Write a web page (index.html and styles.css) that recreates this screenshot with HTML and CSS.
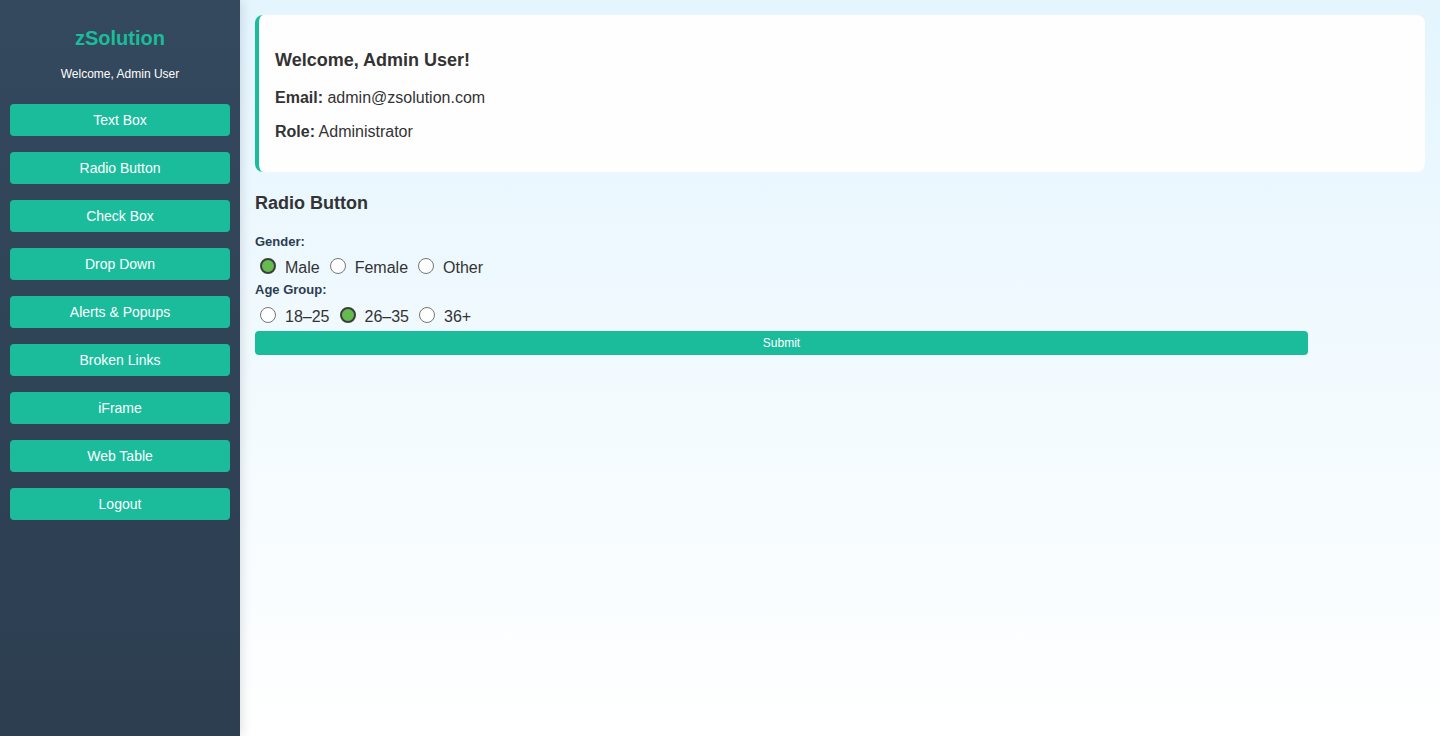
FILE: index.html
```html
<!DOCTYPE html>
<html lang="en">
<head>
<meta charset="utf-8">
<title>zSolution - Radio Button</title>
<link rel="stylesheet" href="styles.css">
</head>
<body>
<div class="layout">
  <aside class="sidebar">
    <h2 class="brand">zSolution</h2>
    <p class="welcome">Welcome, Admin User</p>
    <nav class="nav">
      <button class="nav-btn">Text Box</button>
      <button class="nav-btn">Radio Button</button>
      <button class="nav-btn">Check Box</button>
      <button class="nav-btn">Drop Down</button>
      <button class="nav-btn">Alerts &amp; Popups</button>
      <button class="nav-btn">Broken Links</button>
      <button class="nav-btn">iFrame</button>
      <button class="nav-btn">Web Table</button>
      <button class="nav-btn">Logout</button>
    </nav>
  </aside>
  <main class="main">
    <section class="card">
      <h3 class="card-title">Welcome, Admin User!</h3>
      <p class="card-line"><strong>Email:</strong> admin@zsolution.com</p>
      <p class="card-line"><strong>Role:</strong> Administrator</p>
    </section>
    <h3 class="section-title">Radio Button</h3>
    <form class="form">
      <div class="field-label">Gender:</div>
      <div class="radio-row">
        <label class="opt"><input type="radio" name="gender" checked><span>Male</span></label>
        <label class="opt"><input type="radio" name="gender"><span>Female</span></label>
        <label class="opt"><input type="radio" name="gender"><span>Other</span></label>
      </div>
      <div class="field-label">Age Group:</div>
      <div class="radio-row">
        <label class="opt"><input type="radio" name="age"><span>18–25</span></label>
        <label class="opt"><input type="radio" name="age" checked><span>26–35</span></label>
        <label class="opt"><input type="radio" name="age"><span>36+</span></label>
      </div>
      <button type="button" class="submit">Submit</button>
    </form>
  </main>
</div>
</body>
</html>
```
FILE: styles.css
```css
* { box-sizing: border-box; }
html, body { margin: 0; padding: 0; height: 100%; }
body {
  font-family: "Liberation Sans", Arial, sans-serif;
  color: #333;
}
.layout {
  display: flex;
  min-height: 100vh;
}
.sidebar {
  width: 240px;
  flex: 0 0 240px;
  background: linear-gradient(to bottom, #34495e, #2c3e50);
  box-shadow: 2px 0 10px rgba(0, 0, 0, 0.12);
  padding: 27px 10px 20px;
  display: flex;
  flex-direction: column;
  align-items: stretch;
  position: relative;
  z-index: 1;
}
.brand {
  margin: 0;
  font-size: 20px;
  line-height: 23px;
  font-weight: bold;
  color: #1abc9c;
  text-align: center;
}
.welcome {
  margin: 17px 0 0;
  font-size: 12px;
  line-height: 14px;
  color: #fff;
  text-align: center;
}
.nav {
  display: flex;
  flex-direction: column;
  gap: 16px;
  margin-top: 23px;
}
.nav-btn {
  height: 32px;
  border: none;
  border-radius: 4px;
  background: #1abc9c;
  color: #fff;
  font-family: "Liberation Sans", Arial, sans-serif;
  font-size: 14px;
  padding: 0;
  cursor: pointer;
}
.main {
  flex: 1;
  padding: 15px;
  background: linear-gradient(to bottom, #e4f5fe, #ffffff);
}
.card {
  background: #fefefe;
  border-left: 4px solid #1abc9c;
  border-radius: 8px;
  padding: 35px 16px 30px;
}
.card-title {
  margin: 0 0 17px;
  font-size: 18px;
  line-height: 21px;
  font-weight: bold;
  color: #333;
}
.card-line {
  margin: 14px 0 0;
  font-size: 16px;
  line-height: 20px;
  color: #333;
}
.card-title + .card-line { margin-top: 0; }
.section-title {
  margin: 21px 0 0;
  font-size: 18px;
  line-height: 21px;
  font-weight: bold;
  color: #333;
}
.form {
  width: 90%;
  margin-top: 20px;
}
.field-label {
  font-size: 13px;
  line-height: 15px;
  font-weight: bold;
  color: #2c3e50;
}
.radio-row {
  display: flex;
  align-items: center;
  height: 18px;
  margin: 8px 0 7px;
}
.radio-row + .field-label + .radio-row { margin: 9px 0 7px; }
.opt {
  display: flex;
  align-items: center;
  font-size: 16px;
  line-height: 18px;
  color: #333;
}
.opt span { margin-right: 5px; margin-left: 9px; padding-top: 3px; }
.opt input {
  appearance: none;
  -webkit-appearance: none;
  width: 16px;
  height: 16px;
  margin: 0 0 0 5px;
  border: 1px solid #767676;
  border-radius: 50%;
  background: #fff;
}
.opt input:checked {
  border: 2px solid #3d3d3d;
  background: #66bb4e;
}
.submit {
  display: block;
  width: 100%;
  height: 24px;
  border: none;
  border-radius: 4px;
  background: #1abc9c;
  color: #fff;
  font-family: "Liberation Sans", Arial, sans-serif;
  font-size: 12px;
  padding: 0;
}
```
